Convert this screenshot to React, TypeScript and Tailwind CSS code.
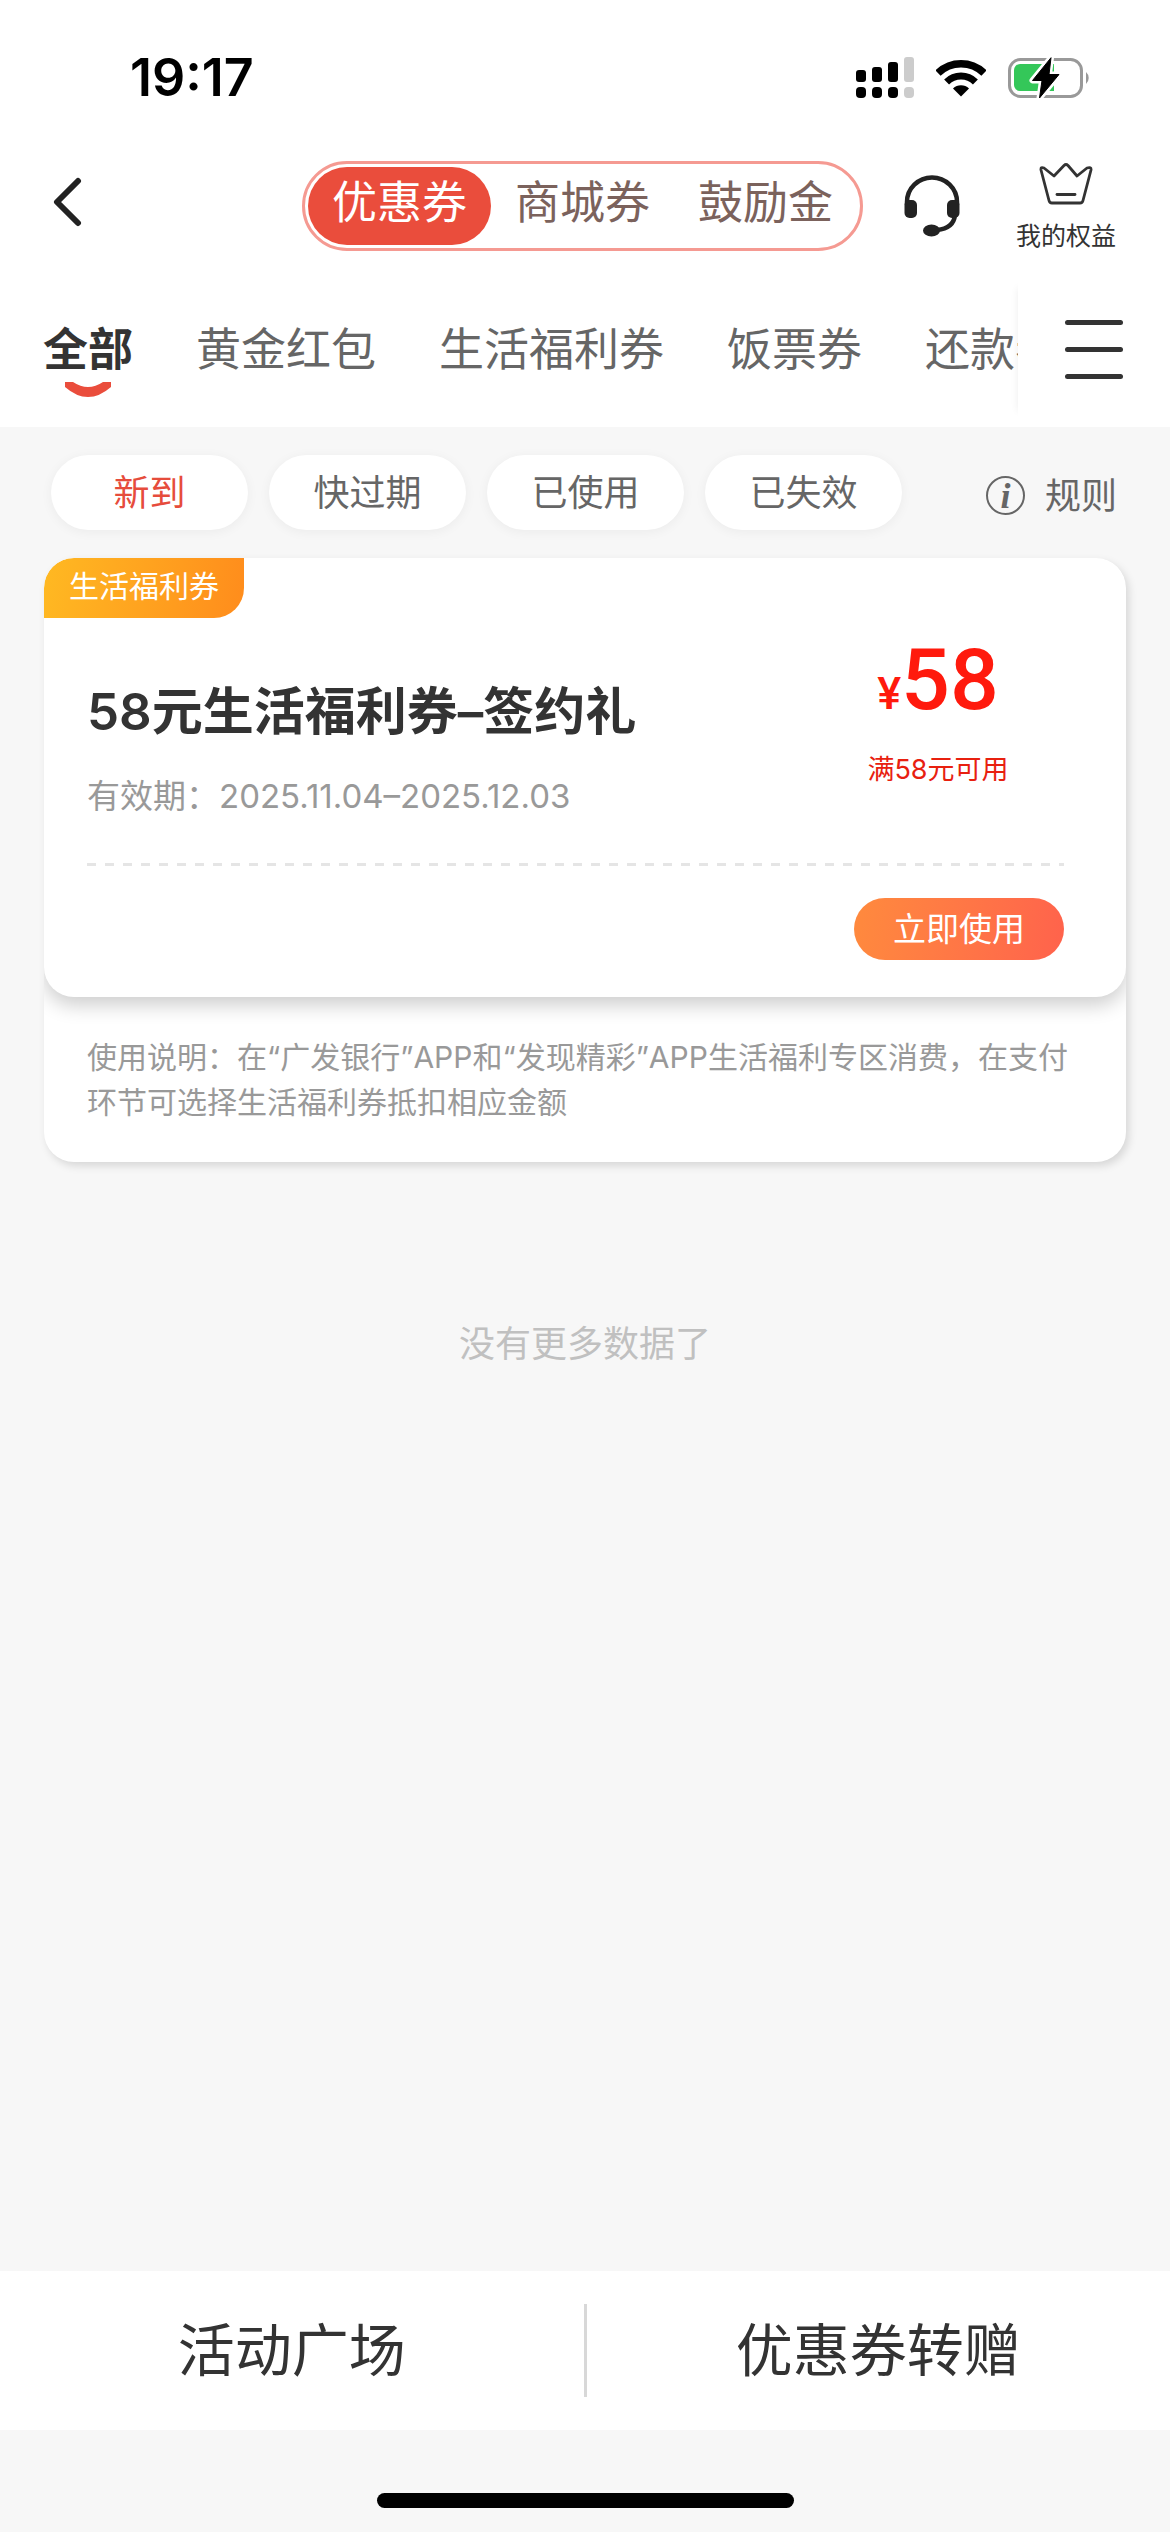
import { useState } from "react";
import clsx from "clsx";

const segments = ["优惠券", "商城券", "鼓励金"];
const categories = ["全部", "黄金红包", "生活福利券", "饭票券", "还款券"];
const filters = ["新到", "快过期", "已使用", "已失效"];

const coupons = [
  {
    id: 1,
    tag: "生活福利券",
    title: "58元生活福利券–签约礼",
    validity: "有效期：2025.11.04–2025.12.03",
    amount: "58",
    condition: "满58元可用",
    note: "使用说明：在“广发银行”APP和“发现精彩”APP生活福利专区消费，在支付环节可选择生活福利券抵扣相应金额",
  },
];

type Coupon = (typeof coupons)[number];

function StatusBar() {
  return (
    <div className="flex h-[156px] items-center justify-between pr-[78px] pl-[130px]">
      <span className="text-[52px] leading-[60px] font-semibold text-black">19:17</span>
      <div className="flex items-center gap-[22px]">
        <svg width="58" height="42" viewBox="0 0 58 42">
          <rect x="0" y="13" width="10" height="12" rx="3" />
          <rect x="16" y="10" width="10" height="15" rx="3" />
          <rect x="32" y="5" width="10" height="20" rx="3" />
          <rect x="48" y="0" width="10" height="25" rx="3" fill="#ccc" />
          <rect x="0" y="30" width="10" height="11" rx="4" />
          <rect x="16" y="30" width="10" height="11" rx="4" />
          <rect x="32" y="30" width="10" height="11" rx="4" />
          <rect x="48" y="30" width="10" height="11" rx="4" fill="#ccc" />
        </svg>
        <svg width="50" height="40" viewBox="0 0 50 40" fill="none" stroke="#000" strokeWidth="7.5">
          <path d="M2 15 A33 33 0 0 1 48 15" />
          <path d="M10.6 24 A20.5 20.5 0 0 1 39.4 24" strokeWidth="7" />
          <path d="M25 38.5 L17 30.5 A11.5 11.5 0 0 1 33 30.5 Z" fill="#000" stroke="none" />
        </svg>
        <svg width="84" height="44" viewBox="0 0 84 44">
          <rect x="1.5" y="3.5" width="72" height="37" rx="11" fill="none" stroke="#999" strokeWidth="3" />
          <path d="M78 16 a8 8 0 0 1 0 12 Z" fill="#999" />
          <path d="M12 8 H46 V35 H12 A6 6 0 0 1 6 29 V14 A6 6 0 0 1 12 8Z" fill="#34c759" />
          <path
            d="M43 1.7 L24.5 24.5 H34 L31.5 42 L51 18.5 H41 Z"
            stroke="#fff"
            strokeWidth="6"
            strokeLinejoin="round"
          />
          <path d="M43 1.7 L24.5 24.5 H34 L31.5 42 L51 18.5 H41 Z" stroke="#000" strokeLinejoin="round" />
        </svg>
      </div>
    </div>
  );
}

function NavBar() {
  const [segment, setSegment] = useState(0);

  return (
    <nav className="flex h-[100px] items-center pr-[54px] pl-[52px]">
      <button type="button" aria-label="返回" className="mb-2">
        <svg width="30" height="50" viewBox="0 0 30 50" fill="none" stroke="#222" strokeWidth="6">
          <path d="M26 4 L5 25 L26 46" strokeLinecap="round" strokeLinejoin="round" />
        </svg>
      </button>

      <div className="ml-auto flex h-[90px] rounded-full border-[3px] border-[#f59a92] p-[3px]">
        {segments.map((label, i) => (
          <button
            key={label}
            type="button"
            onClick={() => setSegment(i)}
            className={clsx(
              "w-[183px] rounded-full pb-1.5 text-[45px] leading-[72px]",
              i === segment ? "bg-[#ea4d3c] text-white" : "text-[#7b625c]"
            )}
          >
            {label}
          </button>
        ))}
      </div>

      <button type="button" aria-label="客服" className="ml-[41px]">
        <svg width="56" height="62" viewBox="0 0 56 62" fill="none" stroke="#222" strokeWidth="4.5">
          <path d="M3 30 V27 A25 24.5 0 0 1 53 27 V30" />
          <path d="M51 40 C50 49 44 54 33 55" />
          <rect x="0.5" y="25" width="12.5" height="18" rx="5" fill="#222" stroke="none" />
          <rect x="43" y="25" width="12.5" height="18" rx="5" fill="#222" stroke="none" />
          <ellipse cx="27.5" cy="55.5" rx="8.5" ry="6" fill="#222" stroke="none" />
        </svg>
      </button>

      <button type="button" className="ml-14 flex flex-col items-center gap-4 text-[25px] leading-[30px] text-[#333]">
        <svg width="54" height="43" viewBox="0 0 54 43" fill="none" stroke="#333" strokeWidth="2.8">
          <path
            d="M2 8 Q1.500 4.500 5 6 L15 14 L25 3.500 Q27 1.500 29 3.500 L38 14 L48 6 Q52.500 4.500 52 8 L44 38.500 Q43.500 41 41 41 H13 Q10.500 41 10 38.500 Z"
            strokeLinejoin="round"
          />
          <path d="M18 32.500 H36" strokeLinecap="round" />
        </svg>
        我的权益
      </button>
    </nav>
  );
}

function CategoryTabs() {
  const [active, setActive] = useState(0);

  return (
    <div className="flex h-[171px]">
      <div className="flex min-w-0 flex-1 gap-[63px] overflow-hidden pt-16 pl-[43px]">
        {categories.map((label, i) => (
          <button
            key={label}
            type="button"
            onClick={() => setActive(i)}
            className={clsx(
              "flex shrink-0 flex-col items-center text-[45px] leading-[60px] whitespace-nowrap",
              i === active ? "font-bold text-[#333]" : "text-[#666]"
            )}
          >
            {label}
            {i === active && (
              <svg width="46" height="16" viewBox="0 0 46 16" className="mt-0.5">
                <path d="M0 0 H8 Q23 10 38 0 H46 V5 Q23 25 0 5 Z" fill="#ea4d3c" />
              </svg>
            )}
          </button>
        ))}
      </div>
      <div className="mt-6 mb-2 flex w-[152px] shrink-0 items-center justify-center shadow-[-8px_0_8px_-8px_rgba(0,0,0,0.07)]">
        <button type="button" aria-label="全部分类" className="flex w-[58px] flex-col gap-[22px]">
          <span className="h-[5px] rounded-full bg-[#333]" />
          <span className="h-[5px] rounded-full bg-[#333]" />
          <span className="h-[5px] rounded-full bg-[#333]" />
        </button>
      </div>
    </div>
  );
}

function FilterRow() {
  const [filter, setFilter] = useState(0);

  return (
    <div className="flex items-center pt-7 pr-[53px] pb-7 pl-[51px] text-[36px] leading-[48px] text-[#666]">
      <div className="flex gap-[21px]">
        {filters.map((label, i) => (
          <button
            key={label}
            type="button"
            onClick={() => setFilter(i)}
            className={clsx(
              "h-[75px] w-[197px] rounded-full bg-white shadow-[0_2px_12px_rgba(0,0,0,0.05)]",
              i === filter && "text-[#e64c3c]"
            )}
          >
            {label}
          </button>
        ))}
      </div>
      <button type="button" className="mt-1.5 ml-auto flex items-center gap-5">
        <span className="flex size-[39px] items-center justify-center rounded-full border-2 border-[#666] font-['Liberation_Serif',serif] text-[36px] leading-[36px] font-bold italic">
          i
        </span>
        规则
      </button>
    </div>
  );
}

function CouponCard({ coupon }: { coupon: Coupon }) {
  return (
    <article className="mx-11 overflow-hidden rounded-[30px] bg-white shadow-[3px_4px_8px_rgba(0,0,0,0.13)]">
      <div className="rounded-[30px] bg-white pb-[37px] shadow-[0_8px_20px_rgba(0,0,0,0.2)]">
        <div className="flex justify-between">
          <div>
            <div className="h-[60px] w-[200px] rounded-tl-[30px] rounded-br-[30px] bg-linear-100 from-[#ffb922] to-[#ff8c1c] text-center text-[30px] leading-[57px] text-white">
              {coupon.tag}
            </div>
            <h2 className="mt-16 pl-[43px] text-[51px] leading-[60px] font-semibold text-[#333]">{coupon.title}</h2>
            <p className="mt-8 pl-[43px] text-[33px] leading-[45px] text-[#999]">{coupon.validity}</p>
          </div>
          <div className="mt-20 mr-[62px] w-[252px] text-center">
            <p className="font-[Roboto,sans-serif] text-[86px] leading-[84px] font-medium text-[#ff1a0d]">
              <span className="text-[45px]">¥</span>
              {coupon.amount}
            </p>
            <p className="mt-4 text-[27px] leading-[36px] text-[#e8200f]">{coupon.condition}</p>
          </div>
        </div>
        <div className="mt-11 mr-[62px] ml-[43px] h-[3px] bg-[repeating-linear-gradient(to_right,#e5e5e5_0_9px,transparent_9px_18px)]" />
        <div className="mt-8 mr-[62px] flex justify-end">
          <button
            type="button"
            className="h-[62px] w-[210px] rounded-full bg-linear-100 from-[#ff8a3d] to-[#ff624c] text-[33px] leading-[62px] text-white"
          >
            立即使用
          </button>
        </div>
      </div>
      <p className="px-[43px] pt-[38px] pb-[37px] text-[30px] leading-[45px] text-[#999]">{coupon.note}</p>
    </article>
  );
}

export default function App() {
  return (
    <div className="flex min-h-screen flex-col bg-[#f7f7f7] font-[Inter,'Noto_Sans_CJK_SC',sans-serif]">
      <header className="bg-white">
        <StatusBar />
        <NavBar />
        <CategoryTabs />
      </header>

      <main className="flex-1">
        <FilterRow />
        {coupons.map((coupon) => (
          <CouponCard key={coupon.id} coupon={coupon} />
        ))}
        <p className="mt-[158px] text-center text-[36px] leading-[48px] text-[#c0c0c0]">没有更多数据了</p>
      </main>

      <footer>
        <div className="flex h-[159px] items-center bg-white text-[57px] leading-[72px] text-[#333]">
          <a href="#activities" className="flex-1 text-center">
            活动广场
          </a>
          <span className="h-[93px] w-[3px] bg-[#d8d8d8]" />
          <a href="#transfer" className="flex-1 text-center">
            优惠券转赠
          </a>
        </div>
        <div className="flex h-[102px] items-end justify-center pb-6">
          <span className="h-[15px] w-[417px] rounded-full bg-black" />
        </div>
      </footer>
    </div>
  );
}
